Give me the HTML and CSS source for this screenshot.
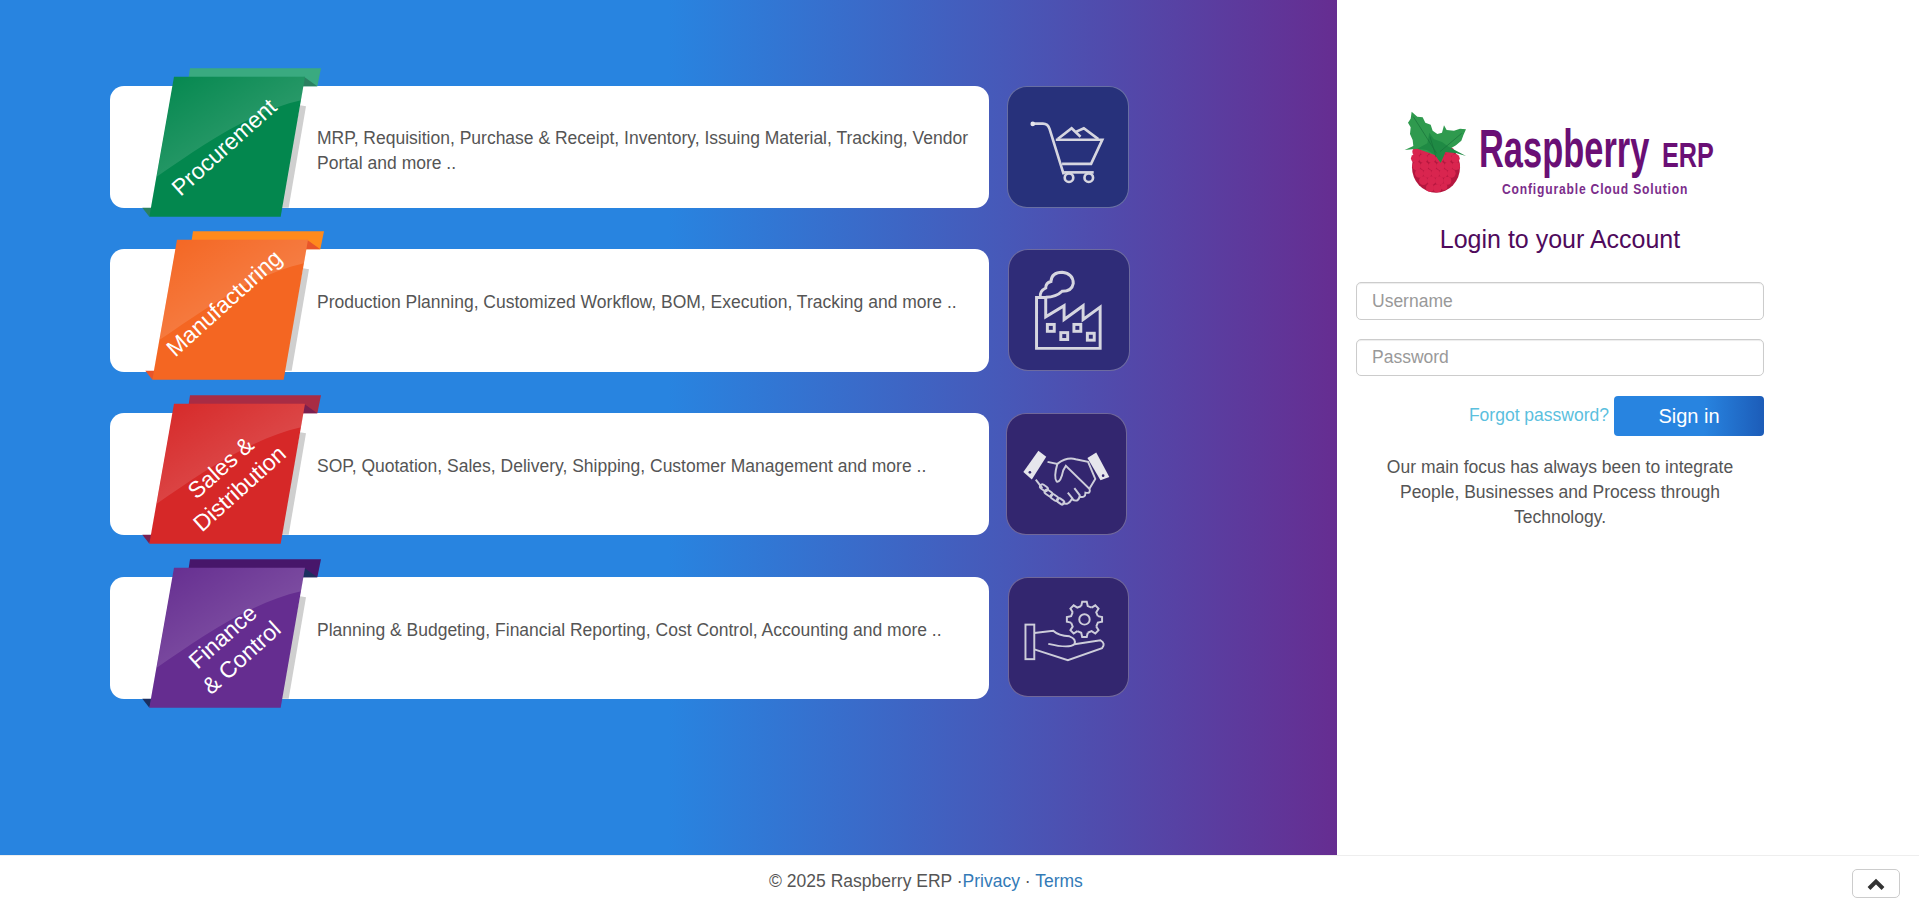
FILE: index.html
```html
<!DOCTYPE html>
<html lang="en">
<head>
<meta charset="utf-8">
<title>Raspberry ERP</title>
<link rel="stylesheet" href="styles.css">
</head>
<body>
<svg class="defs" width="0" height="0" aria-hidden="true">
  <defs>
    <linearGradient id="gloss" gradientUnits="userSpaceOnUse" x1="230" y1="60" x2="400" y2="330">
      <stop offset="0" stop-color="#fff" stop-opacity=".02"/>
      <stop offset="1" stop-color="#fff" stop-opacity=".18"/>
    </linearGradient>
    <symbol id="ribbon" viewBox="30 0 660 500">
      <polygon class="rb-back" points="270,24 663,24 652,78 262,78"/>
      <polygon class="rb-fold" points="612,50 652,78 606,78"/>
      <polygon class="rb-fold" points="127,443 156,443 148,470"/>
      <polygon class="rb-shadow" points="600,135 618,138 566,443 540,443"/>
      <polygon class="rb-base" points="222,50 615,50 542,470 148,470"/>
      <path fill="url(#gloss)" d="M222 50H615L603 120C450 155 300 260 170 350Z"/>
    </symbol>
    <path id="tooth" d="M-10-41-7-54H7L10-41 22-36"/>
  </defs>
</svg>

<main class="page">
  <section class="hero">
    <div class="row">
      <div class="card theme-green">
        <div class="ribbon"><svg class="ribbon-art"><use href="#ribbon"/></svg><span class="ribbon-label label-a">Procurement</span></div>
        <p class="card-text">MRP, Requisition, Purchase &amp; Receipt, Inventory, Issuing Material, Tracking, Vendor Portal and more ..</p>
      </div>
      <div class="tile tile-blue">
        <svg class="tile-art" viewBox="52 48 364 362">
          <g class="line">
            <path d="M125 158H158Q173 158 178 174L221 312"/>
            <path d="M197 207H338L304 280H216"/>
            <path d="M222 306H312"/>
            <path d="M203 205 245 172 272 198M256 184 282 172 326 205"/>
            <circle cx="237" cy="322" r="13"/>
            <circle cx="297" cy="322" r="13"/>
          </g>
          <circle class="solid" cx="127" cy="159" r="7"/>
        </svg>
      </div>
    </div>

    <div class="row">
      <div class="card theme-orange">
        <div class="ribbon ribbon-b"><svg class="ribbon-art"><use href="#ribbon"/></svg><span class="ribbon-label label-b">Manufacturing</span></div>
        <p class="card-text card-text-low">Production Planning, Customized Workflow, BOM, Execution, Tracking and more ..</p>
      </div>
      <div class="tile tile-indigo tile-shift">
        <svg class="tile-art" viewBox="55 538 364 366">
          <g class="line heavy">
            <path d="M138 838V683H166V742L222 708V750L280 708V750L332 712V838Z"/>
            <path d="M150 682Q146 664 166 654Q166 638 182 634Q184 606 216 606Q250 610 250 640Q246 664 216 664Q198 682 166 682"/>
            <rect x="171" y="765" width="21" height="21"/>
            <rect x="212" y="790" width="21" height="21"/>
            <rect x="252" y="765" width="21" height="21"/>
            <rect x="293" y="792" width="21" height="21"/>
          </g>
        </svg>
      </div>
    </div>

    <div class="row">
      <div class="card theme-red">
        <div class="ribbon"><svg class="ribbon-art"><use href="#ribbon"/></svg><span class="ribbon-label label-c">Sales &amp;<br>Distribution</span></div>
        <p class="card-text card-text-low">SOP, Quotation, Sales, Delivery, Shipping, Customer Management and more ..</p>
      </div>
      <div class="tile tile-violet tile-c">
        <svg class="tile-art" viewBox="52 40 364 362">
          <g class="line thin">
            <path d="M176 184 206 190Q236 168 262 176L300 184 322 236 304 266"/>
            <path d="M206 190Q194 232 204 244Q216 248 224 210L232 196 304 266Q310 282 292 278Q292 296 274 290Q270 310 250 298Q238 320 222 308"/>
            <path d="M140 238 160 264"/>
            <path d="M258 264 276 288M238 278 254 298"/>
            <rect x="152" y="256" width="26" height="14" rx="7" transform="rotate(35 165 263)"/>
            <rect x="166" y="272" width="26" height="14" rx="7" transform="rotate(35 179 279)"/>
            <rect x="184" y="286" width="26" height="14" rx="7" transform="rotate(35 197 293)"/>
            <rect x="204" y="298" width="24" height="13" rx="6" transform="rotate(35 216 304)"/>
          </g>
          <polygon class="solid" points="148,150 172,168 128,238 102,215"/>
          <polygon class="solid" points="325,155 365,230 338,240 298,172"/>
          <circle class="hole" cx="122" cy="216" r="4"/>
          <circle class="hole" cx="346" cy="226" r="4"/>
        </svg>
      </div>
    </div>

    <div class="row">
      <div class="card theme-purple">
        <div class="ribbon"><svg class="ribbon-art"><use href="#ribbon"/></svg><span class="ribbon-label label-d">Finance<br>&amp; Control</span></div>
        <p class="card-text card-text-low">Planning &amp; Budgeting, Financial Reporting, Cost Control, Accounting and more ..</p>
      </div>
      <div class="tile tile-violet tile-shift tile-d">
        <svg class="tile-art" viewBox="55 533 364 362">
          <g class="line thin">
            <rect x="105" y="676" width="27" height="106"/>
            <path d="M132 702 190 695Q206 710 240 712Q262 720 255 736Q240 750 175 735M255 736 335 724Q352 734 340 748L235 785 132 752"/>
            <g transform="translate(286 660)">
              <use href="#tooth"/>
              <use href="#tooth" transform="rotate(45)"/>
              <use href="#tooth" transform="rotate(90)"/>
              <use href="#tooth" transform="rotate(135)"/>
              <use href="#tooth" transform="rotate(180)"/>
              <use href="#tooth" transform="rotate(225)"/>
              <use href="#tooth" transform="rotate(270)"/>
              <use href="#tooth" transform="rotate(315)"/>
              <circle r="16"/>
            </g>
          </g>
        </svg>
      </div>
    </div>
  </section>

  <aside class="login">
    <svg class="logo" viewBox="1356 100 408 122">
      <g transform="translate(1380 90) scale(.3333)">
        <ellipse class="berry-bg" cx="168" cy="232" rx="72" ry="76"/>
        <g class="berry">
          <circle cx="110" cy="185" r="13"/><circle cx="135" cy="185" r="13"/><circle cx="160" cy="185" r="13"/><circle cx="185" cy="185" r="13"/><circle cx="210" cy="185" r="13"/>
          <circle cx="106" cy="205" r="13"/><circle cx="130" cy="205" r="13"/><circle cx="154" cy="205" r="13"/><circle cx="178" cy="205" r="13"/><circle cx="202" cy="205" r="13"/><circle cx="226" cy="205" r="13"/>
          <circle cx="110" cy="228" r="13"/><circle cx="134" cy="228" r="13"/><circle cx="158" cy="228" r="13"/><circle cx="182" cy="228" r="13"/><circle cx="206" cy="228" r="13"/><circle cx="228" cy="228" r="12"/>
          <circle cx="118" cy="250" r="13"/><circle cx="142" cy="250" r="13"/><circle cx="166" cy="250" r="13"/><circle cx="190" cy="250" r="13"/><circle cx="214" cy="250" r="13"/>
          <circle cx="130" cy="272" r="13"/><circle cx="154" cy="272" r="13"/><circle cx="178" cy="272" r="13"/><circle cx="202" cy="272" r="12"/>
          <circle cx="150" cy="293" r="12"/><circle cx="172" cy="295" r="12"/><circle cx="192" cy="290" r="10"/>
        </g>
        <polygon class="leaf" points="95,65 112,80 128,82 136,98 152,104 158,122 172,132 186,128 192,106 200,120 222,122 240,116 258,118 250,136 244,152 228,166 210,176 196,186 182,218 166,196 140,186 112,176 74,180 100,168 98,150 90,132 92,112 84,98 92,86"/>
        <polygon class="leaf-dark" points="148,128 162,148 186,156 206,170 258,198 230,190 196,186 182,218 166,196 140,180 112,176 142,160"/>
        <path class="vein" d="M100 80 170 190M245 130 180 185M150 140 168 200"/>
      </g>
      <text class="logo-name" transform="translate(1479 167) scale(.65 1)">Raspberry</text>
      <text class="logo-erp" transform="translate(1662 167) scale(.72 1)">ERP</text>
      <text class="logo-tag" transform="translate(1502 194) scale(.78 1)">Configurable Cloud Solution</text>
    </svg>
    <h1 class="login-title">Login to your Account</h1>
    <form class="login-form">
      <input class="field" type="text" placeholder="Username">
      <input class="field field-last" type="password" placeholder="Password">
      <div class="actions">
        <a class="forgot" href="#">Forgot password?</a>
        <button class="signin" type="button">Sign in</button>
      </div>
    </form>
    <p class="focus">Our main focus has always been to integrate People, Businesses and Process through Technology.</p>
  </aside>
</main>

<footer class="footer">
  <div class="copy">© 2025 Raspberry ERP ·<a href="#">Privacy</a> · <a href="#">Terms</a></div>
  <button class="top" type="button" aria-label="Back to top">
    <svg class="chevron" viewBox="0 0 18 12"><path d="M2 10.5 9 3.500 16 10.5"/></svg>
  </button>
</footer>
</body>
</html>
```
FILE: styles.css
```css
* { box-sizing: border-box; }
html, body { margin: 0; height: 100%; }
body {
  font-family: "Liberation Sans", Arial, sans-serif;
  font-size: 17.5px;
  line-height: 25px;
  color: #555;
  background: #fff;
  display: flex;
  flex-direction: column;
  overflow: hidden;
}
.defs { position: absolute; }

.page { display: flex; height: 855px; }

.hero {
  width: 1337px;
  padding: 85.8px 0 0 110px;
  background: linear-gradient(to right, #2884e0 50%, #662d91 100%);
  display: flex;
  flex-direction: column;
  gap: 41.25px;
}
.row { display: flex; align-items: flex-start; gap: 18px; height: 122.4px; }

.card {
  position: relative;
  width: 879px;
  height: 122.4px;
  background: #fff;
  border-radius: 14px;
  padding: 40px 15px 0 207px;
}
.card-text { margin: 0; }
.card-text-low { margin-top: 1px; }

.theme-green  { --base: #03874e; --back: #3aaa80; --fold: #2a8060; }
.theme-orange { --base: #f46622; --back: #ff8a1c; --fold: #e8552a; }
.theme-red    { --base: #d62828; --back: #a82c44; --fold: #7a1f4f; }
.theme-purple { --base: #652d90; --back: #47166a; --fold: #1b2f5f; }

.ribbon {
  position: absolute;
  left: 0;
  top: -26px;
  width: 220px;
  height: 167px;
}
.ribbon-b { left: 3px; }
.ribbon-art { display: block; width: 220px; height: 167px; }
.rb-base { fill: var(--base); }
.rb-back { fill: var(--back); }
.rb-fold { fill: var(--fold); }
.rb-shadow { fill: #cfcfcf; }

.ribbon-label {
  position: absolute;
  transform: translate(-50%, -50%) rotate(-42deg);
  color: #fff;
  font-size: 23px;
  line-height: 28px;
  text-align: center;
  white-space: nowrap;
}
.label-a { left: 114px; top: 87px; }
.label-b { left: 111px; top: 80px; }
.label-c { left: 120px; top: 91px; }
.label-d { left: 122px; top: 96px; }

.tile {
  width: 122px;
  height: 122px;
  border-radius: 20px;
  border: 1px solid rgba(255, 255, 255, .3);
}
.tile-shift { margin-left: 1px; }
.tile-c { width: 121px; margin-left: -1px; }
.tile-d { width: 121px; height: 120px; }
.tile-blue { background: #27317b; }
.tile-indigo { background: #2f2c78; }
.tile-violet { background: #33266f; }
.tile-art { display: block; width: 100%; height: 100%; }
.line { fill: none; stroke: #d6d6e0; stroke-width: 8; }
.line.heavy { stroke-width: 9; }
.line.thin { stroke: #cdcdda; stroke-width: 6; }
.solid { fill: #e6e6ec; }
.hole { fill: #33266f; }

.login {
  width: 582px;
  padding: 100px 155px 0 19px;
  display: flex;
  flex-direction: column;
}
.logo { display: block; width: 408px; height: 122px; flex: none; }
.berry-bg { fill: #b5173f; }
.berry { fill: #d9254f; }
.leaf { fill: #2f9a4e; }
.leaf-dark { fill: #1f8a44; }
.vein { fill: none; stroke: #17703a; stroke-width: 2; }
.logo-name { font-weight: 700; font-size: 53px; fill: #6a0f75; }
.logo-erp { font-weight: 700; font-size: 35px; fill: #6a0f75; }
.logo-tag { font-weight: 700; font-size: 15.500px; letter-spacing: 1.070px; fill: #7b2d8b; }

.login-title {
  margin: 0 0 26px;
  font-size: 25px;
  font-weight: 400;
  line-height: 34px;
  text-align: center;
  color: #4f0a5c;
}
.login-form { display: flex; flex-direction: column; }
.field {
  width: 408px;
  height: 38px;
  margin-bottom: 19px;
  padding: 6px 15px;
  border: 1px solid #ccc;
  border-radius: 5px;
  box-shadow: inset 0 1px 1px rgba(0, 0, 0, .075);
  font: inherit;
  color: #555;
  background: #fff;
}
.field-last { height: 37px; margin-bottom: 20px; }
.field::placeholder { color: #999; opacity: 1; }
.actions { display: flex; justify-content: flex-end; align-items: center; gap: 5px; }
.forgot { color: #5bc0de; text-decoration: none; padding-bottom: 2px; }
.signin {
  width: 150px;
  height: 40px;
  padding: 0;
  border: 0;
  border-radius: 4px;
  background: linear-gradient(to right, #2884e0 60%, #1c5cb8 100%);
  color: #fff;
  font: 400 20px "Liberation Sans", Arial, sans-serif;
}
.focus { margin: 19px 14px 0; text-align: center; }

.footer {
  flex: 1;
  display: flex;
  align-items: flex-start;
  border-top: 1px solid #eee;
  padding: 13px 19px 0 0;
}
.copy { flex: 1; text-align: center; }
.copy a { color: #337ab7; text-decoration: none; }
.top {
  width: 48px;
  height: 29px;
  padding: 0;
  border: 1px solid #ccc;
  border-radius: 5px;
  background: #fff;
  display: flex;
  align-items: center;
  justify-content: center;
}
.chevron { width: 18px; height: 12px; display: block; }
.chevron path { fill: none; stroke: #333; stroke-width: 4; }
```
